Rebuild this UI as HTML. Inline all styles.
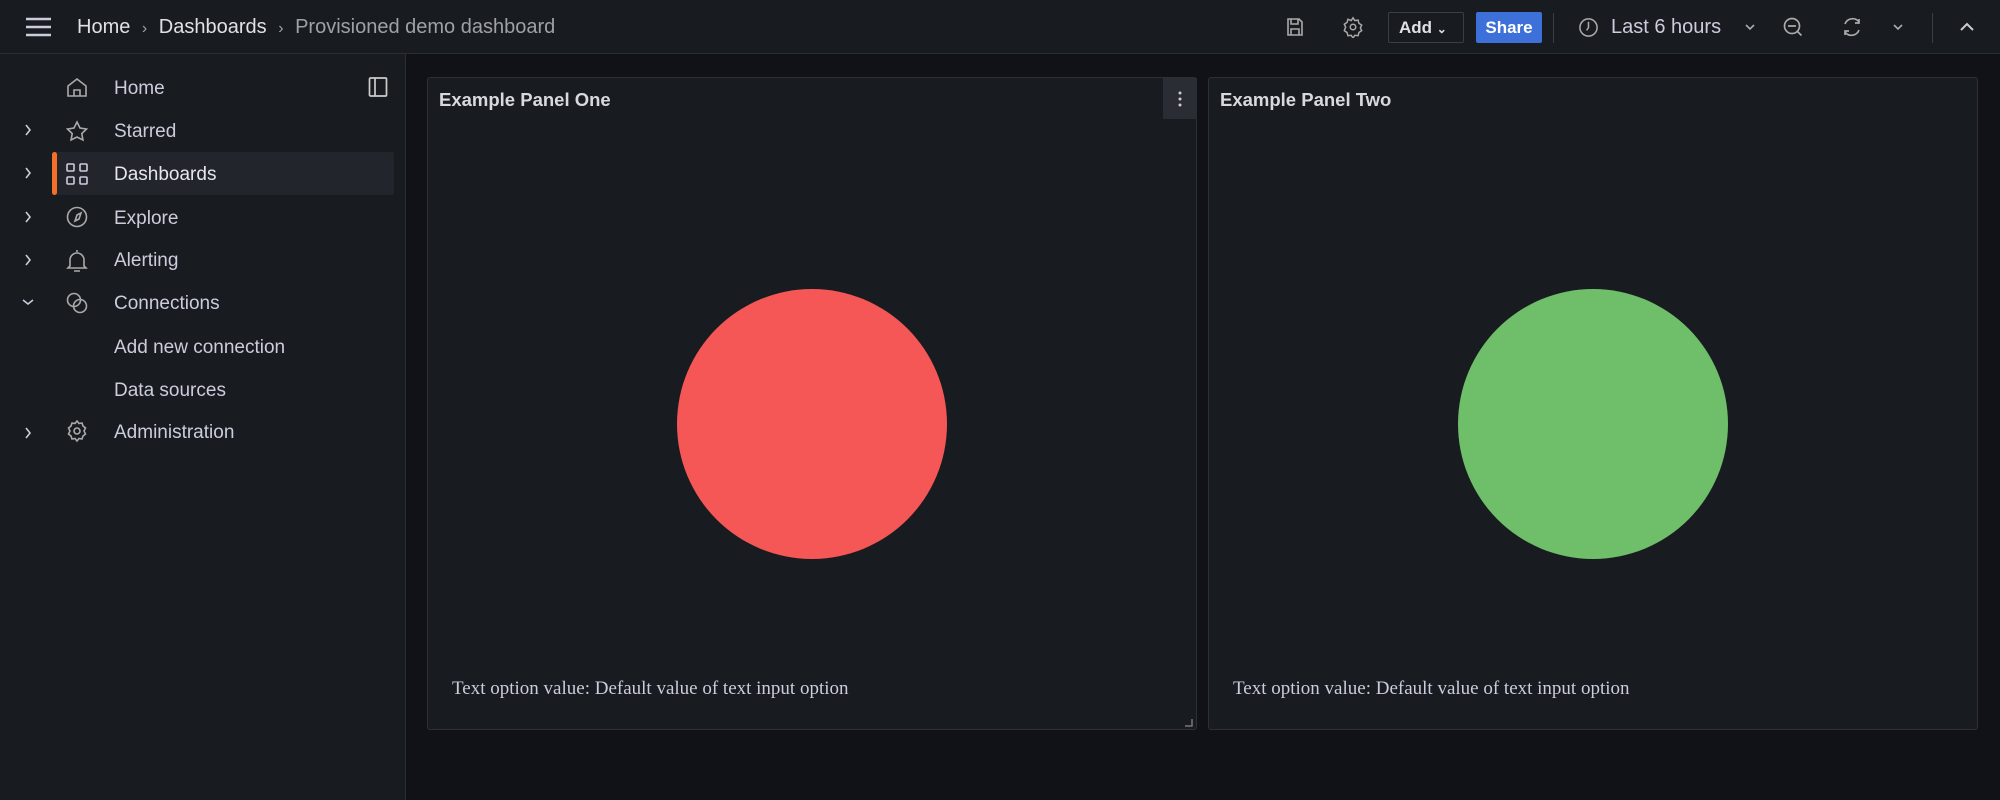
<!DOCTYPE html>
<html><head><meta charset="utf-8"><style>
*{box-sizing:border-box;margin:0;padding:0}
body{width:2000px;height:800px;background:#111217;font-family:"Liberation Sans",sans-serif;color:#ccccdc;position:relative;overflow:hidden}
.top{position:absolute;left:0;top:0;width:2000px;height:54px;background:#181b1f;border-bottom:1px solid #2a2d33}
.side{position:absolute;left:0;top:54px;width:406px;height:746px;background:#181b1f;border-right:1px solid #2a2d33}
.a{position:absolute}
.nav{position:absolute;left:114px;font-size:19px;color:#ccccdc;line-height:24px}
svg{display:block}
.panel{position:absolute;top:77px;width:770px;height:653px;background:#181b1f;border:1px solid #2c2f35;border-radius:3px}
.pt{position:absolute;left:11px;top:11px;font-size:18.5px;font-weight:bold;color:#d8d9e0}
.circ{position:absolute;width:270px;height:270px;border-radius:50%;left:249px;top:211px}
.txt{position:absolute;left:24px;top:600px;font-family:"Liberation Serif",serif;font-size:19px;color:#ccccdc}
</style></head><body>
<div class="top">
 <svg class="a" style="left:25px;top:17px" width="27" height="20" viewBox="0 0 27 20"><path d="M1 2h25M1 10h25M1 18h25" stroke="#ccccdc" stroke-width="2.5"/></svg>
 <div class="a" style="left:77px;top:16px;font-size:20px;color:#e0e0e8">Home <span style="color:#9fa1a8;font-size:16px;margin:0 6px">›</span> Dashboards <span style="color:#9fa1a8;font-size:16px;margin:0 6px">›</span> <span style="color:#9fa1a8">Provisioned demo dashboard</span></div>
 <svg class="a" style="left:1285px;top:17px" width="20" height="20" viewBox="0 0 20 20" fill="none" stroke="#aaa" stroke-width="1.6"><path d="M3 2h11l3 3v13H3z M6 2v5h7V2 M6 18v-6h8v6"/></svg>
 <svg class="a" style="left:1342px;top:16px" width="22" height="22" viewBox="0 0 24 24" fill="none" stroke="#aaa" stroke-width="1.6"><circle cx="12" cy="12" r="3"/><path d="M12 2l2 3 3.5-.5 1 3.5 3 2-1.5 3 1.5 3-3 2-1 3.5L14 21l-2 3-2-3-3.5.5-1-3.5-3-2L4 12 2.5 9l3-2 1-3.5L10 5z"/></svg>
 <div class="a" style="left:1388px;top:12px;width:76px;height:31px;border:1px solid #3b3e45;border-radius:2px;font-size:17px;font-weight:bold;color:#e0e0e8;line-height:29px;padding-left:10px">Add <span style="font-size:12px">⌄</span></div>
 <div class="a" style="left:1476px;top:12px;width:66px;height:31px;background:#3d71d9;border-radius:2px;font-size:17px;font-weight:bold;color:#fff;line-height:31px;text-align:center">Share</div>
 <div class="a" style="left:1553px;top:13px;width:1px;height:30px;background:#3b3e45"></div>
 <svg class="a" style="left:1578px;top:17px" width="21" height="21" viewBox="0 0 22 22" fill="none" stroke="#aaa" stroke-width="1.6"><circle cx="11" cy="11" r="9"/><path d="M11 5v6l-2 3"/></svg>
 <div class="a" style="left:1611px;top:16px;font-size:20px;color:#ccccdc">Last 6 hours</div>
 <svg class="a" style="left:1744px;top:23px" width="12" height="8" viewBox="0 0 12 8"><path d="M2 2l4 4 4-4" stroke="#aaa" stroke-width="1.6" fill="none"/></svg>
 <svg class="a" style="left:1782px;top:16px" width="22" height="22" viewBox="0 0 22 22" fill="none" stroke="#aaa" stroke-width="1.7"><circle cx="10" cy="10" r="7.5"/><path d="M6 10h8M15.5 15.5l4 4"/></svg>
 <svg class="a" style="left:1841px;top:16px" width="22" height="22" viewBox="0 0 22 22" fill="none" stroke="#aaa" stroke-width="1.7"><path d="M4 8a8 8 0 0 1 14-2M18 3v4h-4M18 14a8 8 0 0 1-14 2M4 19v-4h4"/></svg>
 <svg class="a" style="left:1892px;top:23px" width="12" height="8" viewBox="0 0 12 8"><path d="M2 2l4 4 4-4" stroke="#aaa" stroke-width="1.6" fill="none"/></svg>
 <div class="a" style="left:1932px;top:13px;width:1px;height:30px;background:#3b3e45"></div>
 <svg class="a" style="left:1959px;top:21px" width="16" height="12" viewBox="0 0 16 12"><path d="M2 9l6-6 6 6" stroke="#ccc" stroke-width="2" fill="none"/></svg>
</div>
<div class="side">
 <div class="a" style="left:52px;top:98px;width:342px;height:43px;background:#22252b;border-radius:2px"></div>
 <div class="a" style="left:52px;top:98px;width:5px;height:43px;background:#f46f27;border-radius:3px"></div>
 <svg class="a" style="left:368px;top:22px" width="20" height="22" viewBox="0 0 20 22" fill="none" stroke="#ccc" stroke-width="1.7"><rect x="1.5" y="2" width="17" height="18" rx="1"/><path d="M7 2v18"/></svg>
</div>
<svg class="a" style="left:0;top:54px" width="110" height="420" viewBox="0 0 110 420" fill="none" stroke="#ccccdc" stroke-width="1.6">
 <path d="M26 71l4 5-4 5M26 114l4 5-4 5M26 158l4 5-4 5M26 201l4 5-4 5M26 374l4 5-4 5"/>
 <path d="M23 246l5 4 5-4"/>
 <path d="M68 42V32l9-7 9 7v10zM74 42v-6h6v6" stroke="#aaa"/>
 <path d="M77 68l3 6 6.5 1-4.7 4.5 1.1 6.5L77 83l-5.9 3 1.1-6.5L67.5 75l6.5-1z" stroke="#aaa"/>
 <rect x="67" y="110" width="7" height="7" rx="1"/><rect x="80" y="110" width="7" height="7" rx="1"/><rect x="67" y="123" width="7" height="7" rx="1"/><rect x="80" y="123" width="7" height="7" rx="1"/>
 <circle cx="77" cy="163" r="9.5" stroke="#aaa"/><path d="M81 159l-2 6-4 2 2-6z" stroke="#aaa"/>
 <path d="M70 212v-6a7 7 0 0 1 14 0v6l2 2H68zM74 217h6M77 196v2" stroke="#aaa"/>
 <circle cx="74" cy="246" r="6.5" stroke="#aaa"/><circle cx="80" cy="252" r="6.5" stroke="#aaa"/>
 <circle cx="77" cy="377" r="3" stroke="#aaa"/><path d="M77 367l2 2.5 3-.5 1 3 2.5 2-1.5 3 1.5 3-2.5 2-1 3-3-.5-2 2.5-2-2.5-3 .5-1-3-2.5-2 1.5-3-1.5-3 2.5-2 1-3 3 .5z" stroke="#aaa"/>
</svg>
<div class="nav" style="top:77px">Home</div>
<div class="nav" style="top:120px">Starred</div>
<div class="nav" style="top:163px;color:#e6e6ee">Dashboards</div>
<div class="nav" style="top:207px">Explore</div>
<div class="nav" style="top:249px">Alerting</div>
<div class="nav" style="top:292px">Connections</div>
<div class="nav" style="top:336px">Add new connection</div>
<div class="nav" style="top:379px">Data sources</div>
<div class="nav" style="top:421px">Administration</div>

<div class="panel" style="left:427px">
 <div class="pt">Example Panel One</div>
 <div class="a" style="left:735px;top:0;width:34px;height:41px;background:#2a2d33"></div>
 <svg class="a" style="left:749px;top:12px" width="6" height="18" viewBox="0 0 6 18"><circle cx="3" cy="3" r="1.5" fill="#ccc"/><circle cx="3" cy="9" r="1.5" fill="#ccc"/><circle cx="3" cy="15" r="1.5" fill="#ccc"/></svg>
 <div class="circ" style="background:#f55757"></div>
 <div class="txt">Text option value: Default value of text input option</div>
 <svg class="a" style="left:757px;top:641px" width="8" height="8" viewBox="0 0 8 8"><path d="M7 0v7H0" stroke="#777" stroke-width="1.5" fill="none"/></svg>
</div>
<div class="panel" style="left:1208px">
 <div class="pt">Example Panel Two</div>
 <div class="circ" style="background:#6fbe69;left:249px"></div>
 <div class="txt">Text option value: Default value of text input option</div>
</div>
</body></html>
